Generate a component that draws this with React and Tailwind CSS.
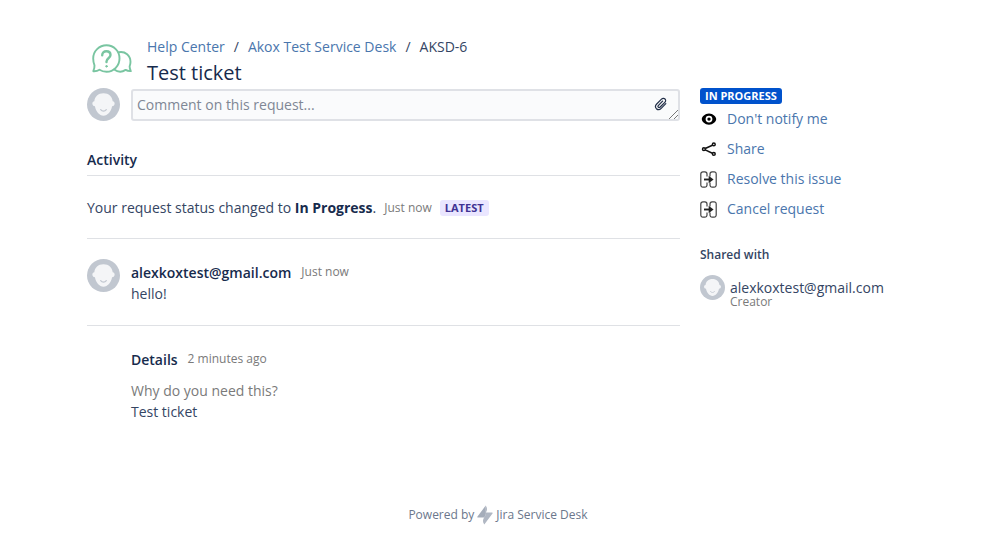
import React from "react";

function Avatar({ className }) {
  return (
    <svg viewBox="0 0 32 32" className={className} aria-hidden="true">
      <circle cx="16" cy="16" r="16" fill="#c1c7d0" />
      <path
        d="M16 5.200c-5.200 0-8.400 3.200-8.900 7.700-1.200.2-1.900 1-1.900 2.200 0 1.500 1 2.500 2.500 2.600C8.600 22.700 12 26.800 16 26.800s7.400-4.100 8.300-9.100c1.500-.1 2.500-1.100 2.500-2.600 0-1.200-.7-2-1.900-2.200-.5-4.500-3.700-7.700-8.900-7.700z"
        fill="#f4f5f7"
      />
      <path d="M13.300 20.900c.7 1 1.600 1.500 2.700 1.500s2-.5 2.700-1.500" fill="none" stroke="#c1c7d0" strokeWidth="1.100" strokeLinecap="round" />
    </svg>
  );
}

function PortalLogo() {
  return (
    <svg viewBox="0 0 40 30" className="h-[30px] w-10" fill="none" stroke="#79c5a1" strokeWidth="1.900" strokeLinejoin="round" strokeLinecap="round" aria-hidden="true">
      <path d="M14.500 1.300c7.300 0 13 5.800 13 13.100s-5.700 13.300-13 13.300c-2.800 0-5-.7-7-2-1.800 1.200-3.800 1.700-6.200 1.500.9-1.900 1.300-3.700 1.200-5.900C1.600 19.200 1.200 17 1.200 14.400 1.200 7.100 7.200 1.300 14.500 1.300z" />
      <path d="M27 8.200c6.300-1.100 11.500 3.400 11.500 9.600 0 1.800-.3 3.100-.9 4.500 0 1.800.4 3.200 1.200 4.800-2 .2-3.700-.3-5.200-1.200-3.600 2.300-8.200 2-11.400-.5" />
      <path d="M10.200 11.200c0-2.400 1.700-4 4.100-4s4.200 1.500 4.200 3.800c0 3.200-4 3.300-4 6.400v.7" strokeWidth="2.400" />
      <circle cx="14.500" cy="22.300" r=".8" fill="#79c5a1" strokeWidth="1" />
    </svg>
  );
}

function EyeIcon() {
  return (
    <svg viewBox="0 0 16 16" className="size-4" aria-hidden="true">
      <path fillRule="evenodd" fill="#000" d="M8 2.400c4 0 7.200 3.200 7.200 5.700S12 13.800 8 13.800.8 10.600.8 8.100 4 2.400 8 2.400zm0 2.300a3.400 3.400 0 100 6.800 3.400 3.400 0 000-6.800z" />
      <circle cx="8" cy="8.100" r="1.700" fill="#000" />
    </svg>
  );
}

function ShareIcon() {
  return (
    <svg viewBox="0 0 16 16" className="size-4" fill="none" stroke="#111" strokeWidth="1.500" aria-hidden="true">
      <path d="M4.200 7.500l7.200-3.300M4.200 8.900l7.200 3.300" />
      <circle cx="2.900" cy="8.200" r="1.400" />
      <circle cx="12.800" cy="3.400" r="1.400" />
      <circle cx="12.800" cy="12.900" r="1.400" />
    </svg>
  );
}

function TransitionIcon() {
  return (
    <svg viewBox="0 0 17 17" className="size-[17px]" fill="none" stroke="#444" strokeWidth="1.200" aria-hidden="true">
      <path d="M7 5.500V2.900A2.100 2.100 0 004.900.8h-2A2.100 2.100 0 00.8 2.900v11.200a2.100 2.100 0 002.100 2.100h2A2.100 2.100 0 007 14.100v-2.600" />
      <path d="M10 5.500V2.900A2.100 2.100 0 0112.100.8h2a2.100 2.100 0 012.100 2.100v11.200a2.100 2.100 0 01-2.100 2.100h-2a2.100 2.100 0 01-2.100-2.100v-2.600" />
      <path d="M4 8.500h7" stroke="#222" strokeWidth="1.900" />
      <path d="M8.700 4.800v7.400l4.900-3.700z" fill="#222" stroke="none" />
    </svg>
  );
}

function ClipIcon() {
  return (
    <svg viewBox="0 0 14 14" className="size-3.5" fill="none" stroke="#222f48" strokeWidth="1.200" strokeLinecap="round" aria-hidden="true">
      <path d="M11.800 6.700l-4.600 4.700c-1.400 1.400-3.500 1.500-4.800.3-1.200-1.300-1.100-3.300.3-4.700l4.800-4.800c1-1 2.600-1.100 3.500-.2s.8 2.400-.2 3.400L6.200 10c-.6.6-1.400.7-1.900.2s-.4-1.300.2-1.900L8.600 4.200" />
    </svg>
  );
}

function Divider() {
  return <hr className="border-t border-[#dfe1e5]" />;
}

const actions = [
  { label: "Don't notify me", Icon: EyeIcon },
  { label: "Share", Icon: ShareIcon },
  { label: "Resolve this issue", Icon: TransitionIcon },
  { label: "Cancel request", Icon: TransitionIcon },
];

export default function App() {
  return (
    <div className="min-h-screen bg-white px-[87px] pt-[37px] font-['Open_Sans','Noto_Sans',sans-serif] text-sm leading-5 text-[#344563]">
      <header className="flex items-start gap-[15px]">
        <div className="ml-[5px] pt-[7px]">
          <PortalLogo />
        </div>
        <div>
          <nav aria-label="Breadcrumb" className="flex gap-[9px]">
            <a href="#help" className="text-[#4a76ad]">Help Center</a>
            <span>/</span>
            <a href="#desk" className="text-[#4a76ad]">Akox Test Service Desk</a>
            <span>/</span>
            <span>AKSD-6</span>
          </nav>
          <h1 className="text-xl leading-[31px] font-medium text-[#172b4d]">Test ticket</h1>
        </div>
      </header>

      <div className="flex items-start gap-5">
        <main className="min-w-0 flex-1">
          <form className="flex items-center gap-[11px]">
            <Avatar className="size-[33px] shrink-0" />
            <div className="relative h-8 flex-1">
              <textarea
                aria-label="Comment on this request"
                placeholder="Comment on this request..."
                rows={1}
                className="block h-8 w-full resize-none overflow-hidden rounded-[3px] border-2 border-[#dfe1e6] bg-[#fafbfc] px-1 py-1 leading-5 placeholder:text-[#7f8795]"
              />
              <button type="button" aria-label="Attach a file" className="absolute top-2 right-3">
                <ClipIcon />
              </button>
              <svg viewBox="0 0 9 9" className="pointer-events-none absolute right-0.5 bottom-0.5 size-[9px]" stroke="#777" strokeWidth="1" aria-hidden="true">
                <path d="M0 9L9 0M5 9L9 5" />
              </svg>
            </div>
          </form>

          <h2 className="mt-[29px] mb-[5px] font-semibold text-[#172b4d]">Activity</h2>
          <Divider />

          <div className="flex items-center pt-[22px] pb-5">
            <p>
              Your request status changed to <strong className="font-bold text-[#172b4d]">In Progress</strong>.
            </p>
            <time className="ml-2 text-xs text-[#7a7a7a]">Just now</time>
            <span className="ml-2 rounded-[3px] bg-[#eae6ff] px-[5px] text-[11px] leading-4 font-bold text-[#403294]">LATEST</span>
          </div>
          <Divider />

          <article className="flex gap-[11px] py-5">
            <Avatar className="size-[33px] shrink-0" />
            <div className="pt-1">
              <div className="flex gap-2.5">
                <h3 className="font-semibold text-[#172b4d]">alexkoxtest@gmail.com</h3>
                <time className="text-xs leading-[18px] text-[#7a7a7a]">Just now</time>
              </div>
              <p className="leading-[22px]">hello!</p>
            </div>
          </article>
          <Divider />

          <section className="pt-6 pl-11">
            <div className="flex gap-2.5">
              <h3 className="font-semibold text-[#172b4d]">Details</h3>
              <time className="text-xs leading-[18px] text-[#7a7a7a]">2 minutes ago</time>
            </div>
            <dl className="mt-[11px]">
              <dt className="leading-5 text-[#7a7a7a]">Why do you need this?</dt>
              <dd className="leading-[22px]">Test ticket</dd>
            </dl>
          </section>
        </main>

        <aside className="w-[212px] shrink-0">
          <span className="block w-fit rounded-[3px] bg-[#0052cc] px-[5px] text-[11px] leading-4 font-bold text-white">IN PROGRESS</span>
          <ul className="mt-[5px] flex flex-col gap-2.5">
            {actions.map(({ label, Icon }) => (
              <li key={label}>
                <button type="button" className="flex items-center gap-2.5 text-[#4a76ad]">
                  <span className="flex w-[17px] justify-center">
                    <Icon />
                  </span>
                  {label}
                </button>
              </li>
            ))}
          </ul>
          <h2 className="mt-[26px] text-xs leading-5 font-semibold text-[#344563]">Shared with</h2>
          <div className="mt-2.5 flex gap-[5px]">
            <Avatar className="size-[25px] shrink-0" />
            <div className="pt-[5px]">
              <p className="leading-4">alexkoxtest@gmail.com</p>
              <p className="text-xs leading-3 text-[#7a7a7a]">Creator</p>
            </div>
          </div>
        </aside>
      </div>

      <footer className="mt-[82px] flex items-center justify-center gap-[3px] pr-[3px] text-xs leading-5 text-[#6b778c]">
        <span>Powered by</span>
        <svg viewBox="0 0 16 20" className="h-5 w-4" aria-hidden="true">
          <path d="M8.700.6l.2 8.600-1.600 3.300H.9c-.6 0-.8-.6-.4-1z" fill="#a5adba" />
          <path d="M8.700.6c1.700 2.200 1.700 4.600.2 6.900h6.200c.6 0 .8.600.4 1L7.300 19.400c-1.700-2.200-1.700-4.600-.2-6.900l1.800-3.300z" fill="#b0b7c3" />
        </svg>
        <span>Jira Service Desk</span>
      </footer>
    </div>
  );
}
